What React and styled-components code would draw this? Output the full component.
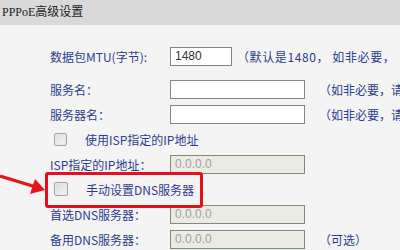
import styled, { createGlobalStyle } from 'styled-components';

const GlobalStyle = createGlobalStyle`
  html, body {
    margin: 0;
    padding: 0;
    width: 400px;
    height: 250px;
    overflow: hidden;
    background: #f4f4f4;
  }
  body {
    font-family: "Liberation Sans", "Noto Sans CJK SC", sans-serif;
  }
`;

export default function App() {
  return (
    <>
      <GlobalStyle />
      <Page>
        <HeaderBar>PPPoE高级设置</HeaderBar>
        <Body>
          <Row>
            <Label>数据包MTU(字节):</Label>
            <TextInput $w={62} defaultValue='1480' />
            <Note $spread>（默认是1480， 如非必要，</Note>
          </Row>
          <Row $mt={8}>
            <Label>服务名：</Label>
            <TextInput $w={135} />
            <Note $ml={14}>（如非必要，请</Note>
          </Row>
          <Row>
            <Label>服务器名：</Label>
            <TextInput $w={135} />
            <Note $ml={14}>（如非必要，请</Note>
          </Row>
          <CheckRow>
            <CheckBox />
            <CheckText>使用ISP指定的IP地址</CheckText>
          </CheckRow>
          <Row>
            <Label>ISP指定的IP地址：</Label>
            <TextInput $w={135} disabled defaultValue='0.0.0.0' />
          </Row>
          <CheckRow>
            {/* 빨간 화살표 + 강조 박스 (annotation) */}
            <Arrow width='50' height='30' viewBox='0 0 50 30'>
              <line x1='0' y1='2' x2='36' y2='13' stroke='#e8141c' strokeWidth='3.2' />
              <polygon points='45,16 30,20 35,5' fill='#e8141c' />
            </Arrow>
            <Highlight />
            <CheckBox $big />
            <CheckText>手动设置DNS服务器</CheckText>
          </CheckRow>
          <Row>
            <Label>首选DNS服务器：</Label>
            <TextInput $w={135} disabled defaultValue='0.0.0.0' />
          </Row>
          <Row>
            <Label>备用DNS服务器：</Label>
            <TextInput $w={135} disabled defaultValue='0.0.0.0' />
            <Note $ml={14}>（可选）</Note>
          </Row>
        </Body>
      </Page>
    </>
  );
}

const Page = styled.div`
  width: 400px;
  height: 250px;
  overflow: hidden;
  background: #f4f4f4;
`;

const HeaderBar = styled.div`
  height: 25px;
  line-height: 25px;
  padding-left: 2px;
  background: #d9d9d9;
  color: #222;
  font-size: 12px;
  font-family: "Liberation Serif", "Noto Sans CJK SC", serif;
  white-space: nowrap;
`;

const Body = styled.div`
  display: flex;
  flex-direction: column;
  gap: 1px;
  padding: 19px 0 0 50px;
`;

const Row = styled.div`
  display: grid;
  grid-template-columns: 120px auto 1fr;
  align-items: center;
  height: 24px;
  margin-top: ${(props) => props.$mt || 0}px;
  white-space: nowrap;
`;

const Label = styled.span`
  font-size: 12px;
  color: #2c3c94;
  font-family: "Noto Sans CJK SC", sans-serif;
`;

const TextInput = styled.input`
  box-sizing: border-box;
  width: ${(props) => props.$w}px;
  height: 19px;
  margin: 0;
  padding: 0 4px;
  border: 1px solid #7c8c7c;
  background: #ffffff;
  color: #333;
  font-size: 12px;
  font-family: "Liberation Sans", Arial, sans-serif;
  outline: none;

  &:disabled {
    background: #ebebe4;
    color: #a0a0a0;
  }
`;

const Note = styled.span`
  margin-left: ${(props) => props.$ml || 5}px;
  font-size: 12px;
  letter-spacing: ${(props) => (props.$spread ? '0.6px' : '0')};
  color: #2c3c94;
  font-family: "Noto Sans CJK SC", sans-serif;
  overflow: hidden;
`;

const CheckRow = styled.div`
  position: relative;
  display: flex;
  align-items: center;
  gap: 18px;
  height: 24px;
  padding-left: 4px;
  white-space: nowrap;
`;

const CheckBox = styled.span`
  box-sizing: border-box;
  width: ${(props) => (props.$big ? 14 : 13)}px;
  height: ${(props) => (props.$big ? 14 : 13)}px;
  border: 1px solid #9aa6b8;
  border-radius: 2px;
  background: linear-gradient(135deg, #dcdcdc 0%, #f4f4f4 100%);
  box-shadow: inset 0 0 0 1px #e8e8e8;
`;

const CheckText = styled.span`
  font-size: 12px;
  color: #2c3c94;
  font-family: "Noto Sans CJK SC", sans-serif;
`;

const Highlight = styled.div`
  position: absolute;
  left: -5px;
  top: -5px;
  width: 158px;
  height: 36px;
  box-sizing: border-box;
  border: 3px solid #e60f1a;
  border-radius: 3px;
  pointer-events: none;
`;

const Arrow = styled.svg`
  position: absolute;
  left: -50px;
  top: -3px;
`;
